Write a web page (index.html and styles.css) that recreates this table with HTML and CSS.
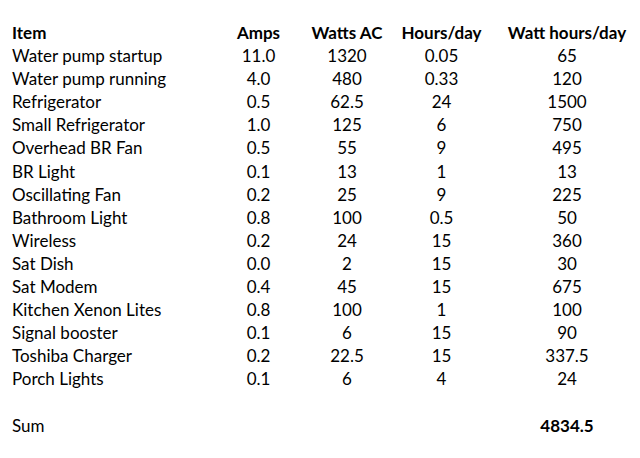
FILE: index.html
```html
<!DOCTYPE html>
<html>
<head>
<meta charset="utf-8">
<link rel="stylesheet" href="styles.css">
</head>
<body>
<div class="sheet">
  <div class="row head"><span class="item">Item</span><span>Amps</span><span>Watts AC</span><span>Hours/day</span><span>Watt hours/day</span></div>
  <div class="row"><span class="item">Water pump startup</span><span>11.0</span><span>1320</span><span>0.05</span><span>65</span></div>
  <div class="row"><span class="item">Water pump running</span><span>4.0</span><span>480</span><span>0.33</span><span>120</span></div>
  <div class="row"><span class="item">Refrigerator</span><span>0.5</span><span>62.5</span><span>24</span><span>1500</span></div>
  <div class="row"><span class="item">Small Refrigerator</span><span>1.0</span><span>125</span><span>6</span><span>750</span></div>
  <div class="row"><span class="item">Overhead BR Fan</span><span>0.5</span><span>55</span><span>9</span><span>495</span></div>
  <div class="row"><span class="item">BR Light</span><span>0.1</span><span>13</span><span>1</span><span>13</span></div>
  <div class="row"><span class="item">Oscillating Fan</span><span>0.2</span><span>25</span><span>9</span><span>225</span></div>
  <div class="row"><span class="item">Bathroom Light</span><span>0.8</span><span>100</span><span>0.5</span><span>50</span></div>
  <div class="row"><span class="item">Wireless</span><span>0.2</span><span>24</span><span>15</span><span>360</span></div>
  <div class="row"><span class="item">Sat Dish</span><span>0.0</span><span>2</span><span>15</span><span>30</span></div>
  <div class="row"><span class="item">Sat Modem</span><span>0.4</span><span>45</span><span>15</span><span>675</span></div>
  <div class="row"><span class="item">Kitchen Xenon Lites</span><span>0.8</span><span>100</span><span>1</span><span>100</span></div>
  <div class="row"><span class="item">Signal booster</span><span>0.1</span><span>6</span><span>15</span><span>90</span></div>
  <div class="row"><span class="item">Toshiba Charger</span><span>0.2</span><span>22.5</span><span>15</span><span>337.5</span></div>
  <div class="row"><span class="item">Porch Lights</span><span>0.1</span><span>6</span><span>4</span><span>24</span></div>
  <div class="row blank"><span class="item">&nbsp;</span></div>
  <div class="row"><span class="item">Sum</span><span></span><span></span><span></span><span class="total">4834.5</span></div>
</div>
</body>
</html>
```

FILE: styles.css
```css
html, body {
  margin: 0;
  padding: 0;
  background: #ffffff;
  overflow: hidden;
}

.sheet {
  padding: 21px 0 0 12px;
  font-family: Lato, "Open Sans", sans-serif;
  font-size: 17px;
  line-height: 23.1px;
  color: #000000;
}

.row {
  display: grid;
  grid-template-columns: 202px 89px 88px 101px 150px;
  white-space: nowrap;
}

.row span {
  text-align: center;
}

.row .item {
  text-align: left;
}

.head {
  font-weight: bold;
}

.total {
  font-weight: bold;
}
```
